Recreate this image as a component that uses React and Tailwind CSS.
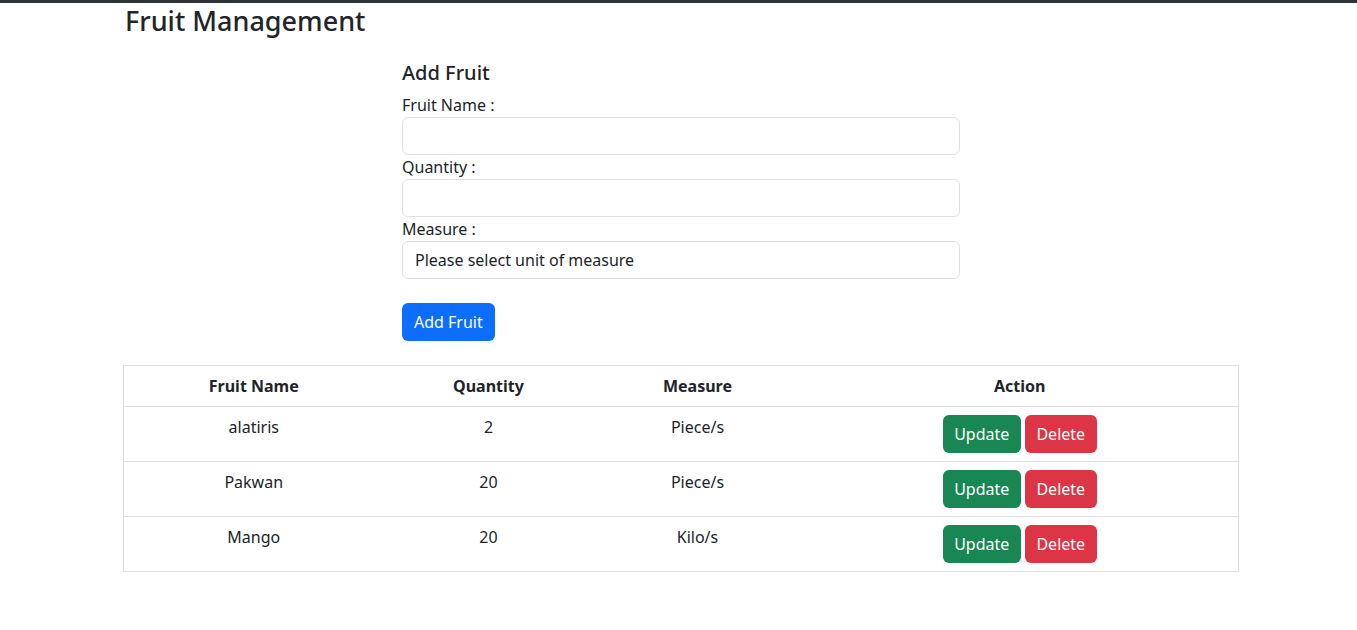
import { useState } from "react";

const fruits = [
  { name: "alatiris", qty: 2, measure: "Piece/s" },
  { name: "Pakwan", qty: 20, measure: "Piece/s" },
  { name: "Mango", qty: 20, measure: "Kilo/s" },
];

export default function App() {
  const [form, setForm] = useState({ name: "", qty: "", measure: "" });

  return (
    <div
      className="min-h-screen bg-white border-t-[3px] border-[#2f3337] text-[#212529] text-base"
      style={{ fontFamily: '"Segoe UI", "Noto Sans", sans-serif' }}
    >
      <div className="mx-auto w-[1121px] pl-[5px]">
        <h3 className="text-[27px] leading-[1.2] font-medium mt-[2px] ml-[2px]">Fruit Management</h3>

        {/* ADD FRUIT FORM */}
        <div className="w-[558px] mx-auto mt-[24px]">
          <h5 className="text-[20px] leading-[24px] font-medium mb-2">Add Fruit</h5>

          <label className="block leading-6">Fruit Name :</label>
          <input
            type="text"
            value={form.name}
            onChange={(e) => setForm({ ...form, name: e.target.value })}
            className="block w-full h-[38px] px-3 border border-[#dee2e6] rounded-md outline-none"
          />

          <label className="block leading-6">Quantity :</label>
          <input
            type="text"
            value={form.qty}
            onChange={(e) => setForm({ ...form, qty: e.target.value })}
            className="block w-full h-[38px] px-3 border border-[#dee2e6] rounded-md outline-none"
          />

          <label className="block leading-6">Measure :</label>
          <select
            value={form.measure}
            onChange={(e) => setForm({ ...form, measure: e.target.value })}
            className="block w-full h-[38px] px-3 border border-[#dee2e6] rounded-md outline-none appearance-none bg-white"
          >
            <option value="">Please select unit of measure</option>
            <option value="Piece/s">Piece/s</option>
            <option value="Kilo/s">Kilo/s</option>
          </select>

          <button className="mt-6 h-[38px] px-3 rounded-md bg-[#0d6efd] text-white">Add Fruit</button>
        </div>

        {/* FRUIT TABLE */}
        <table className="mt-6 w-full border border-[#dee2e6] border-collapse text-center">
          <thead>
            <tr className="border-b border-[#dee2e6]">
              <th className="w-[260px] p-2 leading-6 font-bold">Fruit Name</th>
              <th className="w-[210px] p-2 leading-6 font-bold">Quantity</th>
              <th className="w-[208px] p-2 leading-6 font-bold">Measure</th>
              <th className="p-2 leading-6 font-bold">Action</th>
            </tr>
          </thead>
          <tbody>
            {fruits.map((f) => (
              <tr key={f.name} className="border-b border-[#dee2e6]">
                <td className="p-2 leading-6 align-top">{f.name}</td>
                <td className="p-2 leading-6 align-top">{f.qty}</td>
                <td className="p-2 leading-6 align-top">{f.measure}</td>
                <td className="p-2 align-top">
                  <div className="flex justify-center gap-1">
                    <button className="h-[38px] w-[78px] rounded-md bg-[#198754] text-white">Update</button>
                    <button className="h-[38px] w-[72px] rounded-md bg-[#dc3545] text-white">Delete</button>
                  </div>
                </td>
              </tr>
            ))}
          </tbody>
        </table>
      </div>
    </div>
  );
}
